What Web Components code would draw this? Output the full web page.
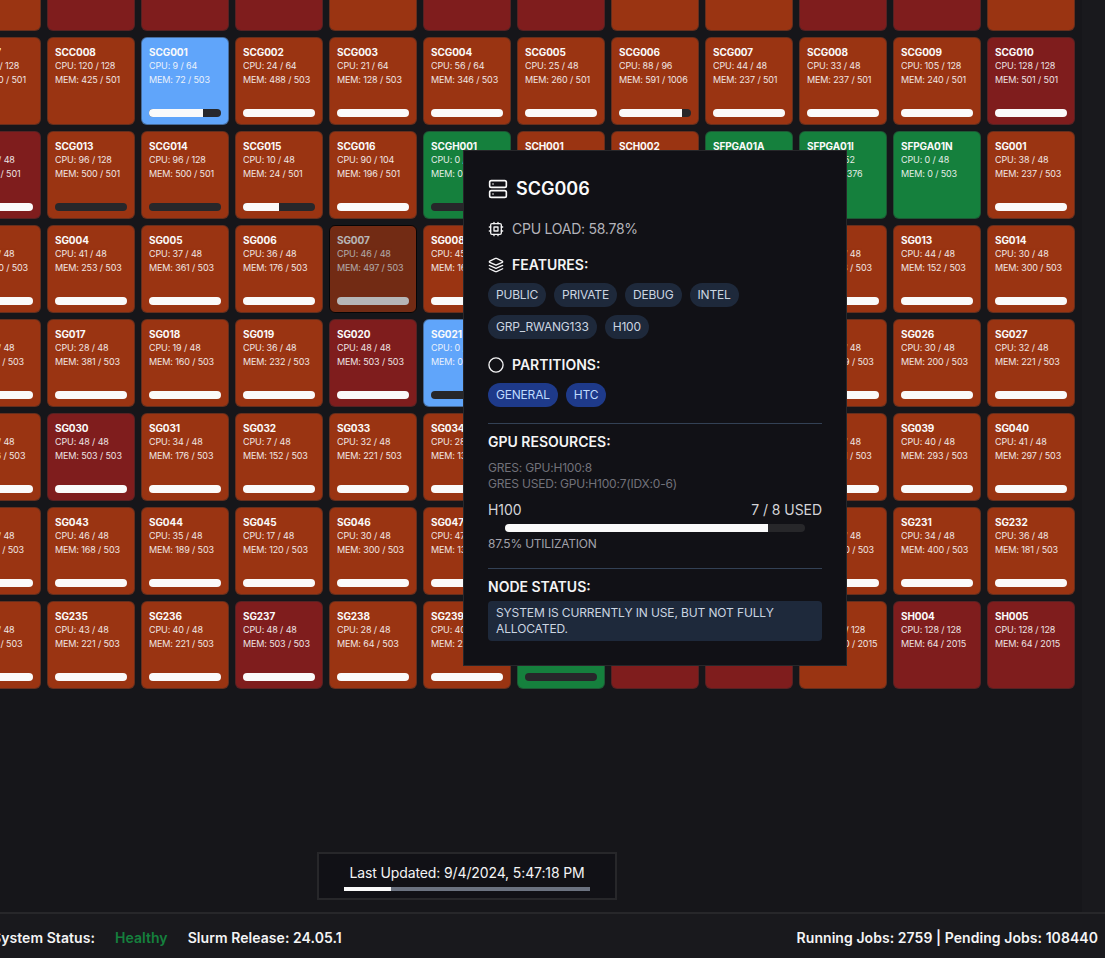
<!DOCTYPE html>
<html lang="en">
<head>
<meta charset="utf-8">
<title>Cluster nodes</title>
<style>
  html, body { margin: 0; height: 100%; background: #19191d; overflow: hidden; }
  body { font-family: Inter, "Noto Sans", sans-serif; color: #fafafa; }
</style>
</head>
<body>
<cluster-app></cluster-app>

<script>
/* Cluster node overview: a grid of node cards, one open detail panel,
 * refresh badge and footer status bar. */
(function () {
  const COLORS = { o: '#9a3412', r: '#7f1d1d', g: '#15803d', b: '#60a5fa' };

  // [name, state, cpu, mem, bar%]  bar null = no bar drawn
  const NODES = [
    ['', 'o', '', '', null], ['', 'r', '', '', null], ['', 'r', '', '', null], ['', 'r', '', '', null],
    ['', 'o', '', '', null], ['', 'r', '', '', null], ['', 'r', '', '', null], ['', 'o', '', '', null],
    ['', 'o', '', '', null], ['', 'r', '', '', null], ['', 'r', '', '', null], ['', 'o', '', '', null],

    ['SCC007', 'o', '112 / 128', '320 / 501', null],
    ['SCC008', 'o', '120 / 128', '425 / 501', null],
    ['SCG001', 'b', '9 / 64', '72 / 503', 75],
    ['SCG002', 'o', '24 / 64', '488 / 503', 100],
    ['SCG003', 'o', '21 / 64', '128 / 503', 100],
    ['SCG004', 'o', '56 / 64', '346 / 503', 100],
    ['SCG005', 'o', '25 / 48', '260 / 501', 100],
    ['SCG006', 'o', '88 / 96', '591 / 1006', 87.5],
    ['SCG007', 'o', '44 / 48', '237 / 501', 100],
    ['SCG008', 'o', '33 / 48', '237 / 501', 100],
    ['SCG009', 'o', '105 / 128', '240 / 501', 100],
    ['SCG010', 'r', '128 / 128', '501 / 501', 100],

    ['SCG012', 'r', '48 / 48', '24 / 501', 100],
    ['SCG013', 'o', '96 / 128', '500 / 501', 0],
    ['SCG014', 'o', '96 / 128', '500 / 501', 0],
    ['SCG015', 'o', '10 / 48', '24 / 501', 50],
    ['SCG016', 'o', '90 / 104', '196 / 501', 100],
    ['SCGH001', 'g', '0 / 48', '0 / 503', 0],
    ['SCH001', 'o', '24 / 48', '96 / 503', 100],
    ['SCH002', 'o', '24 / 48', '96 / 503', 100],
    ['SFPGA01A', 'g', '0 / 52', '0 / 376', null],
    ['SFPGA01I', 'g', '0 / 52', '0 / 376', null],
    ['SFPGA01N', 'g', '0 / 48', '0 / 503', null],
    ['SG001', 'o', '38 / 48', '237 / 503', 100],

    ['SG003', 'o', '36 / 48', '300 / 503', 100],
    ['SG004', 'o', '41 / 48', '253 / 503', 100],
    ['SG005', 'o', '37 / 48', '361 / 503', 100],
    ['SG006', 'o', '36 / 48', '176 / 503', 100],
    ['SG007', 'o', '46 / 48', '497 / 503', 100, true],
    ['SG008', 'o', '45 / 48', '168 / 503', 100],
    ['SG009', 'o', '30 / 48', '200 / 503', 100],
    ['SG010', 'o', '30 / 48', '200 / 503', 100],
    ['SG011', 'o', '30 / 48', '200 / 503', 100],
    ['SG012', 'o', '40 / 48', '168 / 503', 100],
    ['SG013', 'o', '44 / 48', '152 / 503', 100],
    ['SG014', 'o', '30 / 48', '300 / 503', 100],

    ['SG016', 'o', '36 / 48', '181 / 503', 100],
    ['SG017', 'o', '28 / 48', '381 / 503', 100],
    ['SG018', 'o', '19 / 48', '160 / 503', 100],
    ['SG019', 'o', '36 / 48', '232 / 503', 100],
    ['SG020', 'r', '48 / 48', '503 / 503', 100],
    ['SG021', 'b', '0 / 48', '0 / 503', 0],
    ['SG022', 'o', '30 / 48', '200 / 503', 100],
    ['SG023', 'o', '30 / 48', '200 / 503', 100],
    ['SG024', 'o', '30 / 48', '200 / 503', 100],
    ['SG025', 'o', '40 / 48', '289 / 503', 100],
    ['SG026', 'o', '30 / 48', '200 / 503', 100],
    ['SG027', 'o', '32 / 48', '221 / 503', 100],

    ['SG029', 'o', '36 / 48', '176 / 503', 100],
    ['SG030', 'r', '48 / 48', '503 / 503', 100],
    ['SG031', 'o', '34 / 48', '176 / 503', 100],
    ['SG032', 'o', '7 / 48', '152 / 503', 100],
    ['SG033', 'o', '32 / 48', '221 / 503', 100],
    ['SG034', 'o', '28 / 48', '132 / 503', 100],
    ['SG035', 'o', '30 / 48', '200 / 503', 100],
    ['SG036', 'o', '30 / 48', '200 / 503', 100],
    ['SG037', 'o', '30 / 48', '200 / 503', 100],
    ['SG038', 'o', '40 / 48', '221 / 503', 100],
    ['SG039', 'o', '40 / 48', '293 / 503', 100],
    ['SG040', 'o', '41 / 48', '297 / 503', 100],

    ['SG042', 'o', '36 / 48', '181 / 503', 100],
    ['SG043', 'o', '46 / 48', '168 / 503', 100],
    ['SG044', 'o', '35 / 48', '189 / 503', 100],
    ['SG045', 'o', '17 / 48', '120 / 503', 100],
    ['SG046', 'o', '30 / 48', '300 / 503', 100],
    ['SG047', 'o', '47 / 48', '132 / 503', 100],
    ['SG048', 'o', '30 / 48', '200 / 503', 100],
    ['SG049', 'o', '30 / 48', '200 / 503', 100],
    ['SG229', 'o', '30 / 48', '200 / 503', 100],
    ['SG230', 'o', '40 / 48', '300 / 503', 100],
    ['SG231', 'o', '34 / 48', '400 / 503', 100],
    ['SG232', 'o', '36 / 48', '181 / 503', 100],

    ['SG234', 'o', '36 / 48', '96 / 503', 100],
    ['SG235', 'o', '43 / 48', '221 / 503', 100],
    ['SG236', 'o', '40 / 48', '221 / 503', 100],
    ['SG237', 'r', '48 / 48', '503 / 503', 100],
    ['SG238', 'o', '28 / 48', '64 / 503', 100],
    ['SG239', 'o', '40 / 48', '221 / 503', 100],
    ['SGM001', 'g', '0 / 48', '0 / 503', 0],
    ['SH001', 'r', '128 / 128', '64 / 2015', null],
    ['SH002', 'r', '128 / 128', '64 / 2015', null],
    ['SH003', 'o', '112 / 128', '320 / 2015', null],
    ['SH004', 'r', '128 / 128', '64 / 2015', null],
    ['SH005', 'r', '128 / 128', '64 / 2015', null],
  ];

  const ICONS = {
    server: '<rect x="2" y="2" width="20" height="8" rx="2"/><rect x="2" y="14" width="20" height="8" rx="2"/><line x1="6" y1="6" x2="6.01" y2="6"/><line x1="6" y1="18" x2="6.01" y2="18"/>',
    cpu: '<rect x="4" y="4" width="16" height="16" rx="2"/><rect x="9" y="9" width="6" height="6"/><path d="M15 2v2M15 20v2M2 15h2M2 9h2M20 15h2M20 9h2M9 2v2M9 20v2"/>',
    layers: '<path d="m12.83 2.18a2 2 0 0 0-1.66 0L2.6 6.08a1 1 0 0 0 0 1.83l8.58 3.91a2 2 0 0 0 1.66 0l8.58-3.9a1 1 0 0 0 0-1.83Z"/><path d="m22 17.65-9.17 4.16a2 2 0 0 1-1.66 0L2 17.65"/><path d="m22 12.65-9.17 4.16a2 2 0 0 1-1.66 0L2 12.65"/>',
    circle: '<circle cx="12" cy="12" r="10.6"/>',
  };
  const icon = (name, size) =>
    `<svg width="${size}" height="${size}" viewBox="0 0 24 24" fill="none" stroke="currentColor" stroke-width="2" stroke-linecap="round" stroke-linejoin="round">${ICONS[name]}</svg>`;

  class NodeCard extends HTMLElement {
    connectedCallback() {
      const state = this.getAttribute('state') || 'o';
      const name = this.getAttribute('name') || '';
      const bar = this.getAttribute('bar');
      const root = this.attachShadow({ mode: 'open' });
      root.innerHTML = `
        <style>
          :host{ display:block; box-sizing:border-box; height:88px; padding:8px 7px 7px; position:relative;
                 background:${COLORS[state]}; border:1px solid rgba(39,39,42,.45); border-radius:6px;
                 font-size:9px; line-height:14px; color:#fafafa; overflow:hidden; }
          :host([dim]){ opacity:.7; border-color:#000; }
          .name{ font-weight:700; font-size:10px; line-height:13px; letter-spacing:-.1px; }
          .line{ opacity:.9; font-weight:400; white-space:nowrap; letter-spacing:-.12px; }
          .bar{ position:absolute; left:7px; right:7px; bottom:7px; height:8px; border-radius:99px;
                background:#27272a; overflow:hidden; }
          .fill{ height:100%; background:#fafafa; }
        </style>
        ${name ? `<div class="name">${name}</div>
        <div class="line">CPU: ${this.getAttribute('cpu')}</div>
        <div class="line">MEM: ${this.getAttribute('mem')}</div>` : ''}
        ${bar !== null ? `<div class="bar"><div class="fill" style="width:${bar}%"></div></div>` : ''}`;
    }
  }
  customElements.define('node-card', NodeCard);

  class NodeGrid extends HTMLElement {
    connectedCallback() {
      const root = this.attachShadow({ mode: 'open' });
      root.innerHTML = `
        <style>
          :host{ display:grid; grid-template-columns:repeat(12, 88px); gap:6px;
                 margin:-57px 0 0 -47px; width:max-content; }
        </style>`;
      NODES.forEach(([name, state, cpu, mem, bar, dim]) => {
        const c = document.createElement('node-card');
        c.setAttribute('state', state);
        if (name) {
          c.setAttribute('name', name);
          c.setAttribute('cpu', cpu);
          c.setAttribute('mem', mem);
        }
        if (bar !== null) c.setAttribute('bar', bar);
        if (dim) c.setAttribute('dim', '');
        root.appendChild(c);
      });
    }
  }
  customElements.define('node-grid', NodeGrid);

  class TagPill extends HTMLElement {
    connectedCallback() {
      this.attachShadow({ mode: 'open' }).innerHTML = `
        <style>
          :host{ display:inline-block; height:24px; line-height:24px; padding:0 8px; border-radius:12px;
                 font-size:12px; letter-spacing:-.2px; background:#1e293b; color:#cbd5e1; white-space:nowrap; }
          :host([kind="partition"]){ background:#1e3a8a; color:#bfdbfe; }
        </style><slot></slot>`;
    }
  }
  customElements.define('tag-pill', TagPill);

  class NodeDetails extends HTMLElement {
    connectedCallback() {
      this.attachShadow({ mode: 'open' }).innerHTML = `
        <style>
          :host{ display:block; position:absolute; left:463px; top:150px; width:384px; box-sizing:border-box;
                 padding:24px; background:#111116; border:1px solid #27272a; font-size:14px; line-height:20px;
                 text-transform:uppercase; z-index:10; }
          .head{ display:flex; align-items:center; gap:8px; height:28px; font-size:18px; font-weight:600;
                 line-height:28px; color:#fafafa; margin-bottom:16px; }
          .row{ display:flex; align-items:center; gap:8px; }
          .row svg{ flex:none; }
          .load{ color:#b4b4bb; letter-spacing:-.25px; }
          .load svg{ color:#f4f4f5; }
          .sec{ font-weight:600; color:#f4f4f5; margin-top:16px; }
          .tags{ display:flex; flex-wrap:wrap; gap:8px; margin-top:8px; }
          hr{ border:0; border-top:1px solid #334155; margin:16px 0 8px; }
          .plain{ font-weight:600; color:#f4f4f5; }
          .gres{ font-size:12px; line-height:16px; letter-spacing:-.2px; color:#71717a; margin-top:8px; }
          .usage{ display:flex; justify-content:space-between; color:#d4d4d8; margin-top:8px; letter-spacing:-.05px; }
          .track{ width:300px; height:8px; margin:4px auto 0; background:#27272a; border-radius:99px; overflow:hidden; }
          .track div{ width:87.5%; height:100%; background:#fafafa; }
          .util{ font-size:12px; line-height:16px; letter-spacing:-.22px; color:#a1a1aa; margin-top:4px; }
          .note{ margin-top:4px; padding:4px 8px; background:#1e293b; border-radius:4px; font-size:12px;
                 line-height:16px; letter-spacing:-.12px; color:#cbd5e1; }
        </style>
        <div class="head">${icon('server', 20)}<span>SCG006</span></div>
        <div class="row load">${icon('cpu', 16)}<span>CPU Load: 58.78%</span></div>
        <div class="row sec">${icon('layers', 16)}<span>Features:</span></div>
        <div class="tags">
          <tag-pill>PUBLIC</tag-pill><tag-pill>PRIVATE</tag-pill><tag-pill>DEBUG</tag-pill><tag-pill>INTEL</tag-pill>
          <tag-pill>GRP_RWANG133</tag-pill><tag-pill>H100</tag-pill>
        </div>
        <div class="row sec">${icon('circle', 16)}<span>Partitions:</span></div>
        <div class="tags">
          <tag-pill kind="partition">GENERAL</tag-pill><tag-pill kind="partition">HTC</tag-pill>
        </div>
        <hr>
        <div class="plain">GPU Resources:</div>
        <div class="gres">GRES: gpu:h100:8<br>GRES Used: gpu:h100:7(IDX:0-6)</div>
        <div class="usage"><span>H100</span><span>7 / 8 used</span></div>
        <div class="track"><div></div></div>
        <div class="util">87.5% utilization</div>
        <hr>
        <div class="plain">Node Status:</div>
        <div class="note">System is currently in use, but not fully allocated.</div>`;
    }
  }
  customElements.define('node-details', NodeDetails);

  class UpdateBadge extends HTMLElement {
    connectedCallback() {
      this.attachShadow({ mode: 'open' }).innerHTML = `
        <style>
          :host{ display:block; box-sizing:border-box; width:300px; height:48px; padding:9px 25px 0;
                 background:#111116; border:2px solid #27272a; font-size:14px; line-height:20px;
                 letter-spacing:-.12px; text-align:center; color:#f4f4f5; margin:auto 0 12px 317px; }
          .track{ height:4px; margin-top:4px; background:#6b7280; }
          .track div{ width:19%; height:100%; background:#fafafa; }
        </style>
        <div>Last Updated: 9/4/2024, 5:47:18 PM</div>
        <div class="track"><div></div></div>`;
    }
  }
  customElements.define('update-badge', UpdateBadge);

  class StatusFooter extends HTMLElement {
    connectedCallback() {
      this.attachShadow({ mode: 'open' }).innerHTML = `
        <style>
          :host{ display:flex; align-items:center; justify-content:space-between; flex:none; box-sizing:border-box;
                 height:46px; padding:2px 7px 0 0; border-top:2px solid #27272a; font-size:14px; font-weight:600;
                 letter-spacing:.06px; color:#f4f4f5; white-space:nowrap; }
          .left{ display:flex; gap:20px; margin-left:-8px; }
          .ok{ color:#15803d; }
        </style>
        <div class="left"><span>System Status:</span><span class="ok">Healthy</span><span>Slurm Release: 24.05.1</span></div>
        <div>Running Jobs: 2759 | Pending Jobs: 108440</div>`;
    }
  }
  customElements.define('status-footer', StatusFooter);

  class ClusterApp extends HTMLElement {
    connectedCallback() {
      this.attachShadow({ mode: 'open' }).innerHTML = `
        <style>
          :host{ display:flex; flex-direction:column; height:100vh; overflow:hidden; }
          main{ flex:1; min-height:0; position:relative; overflow:hidden; display:flex; flex-direction:column; }
          .wash{ position:absolute; left:0; right:23px; top:0; bottom:0; background:#16161a; }
          node-grid, update-badge{ position:relative; }
        </style>
        <main>
          <div class="wash"></div>
          <node-grid></node-grid>
          <update-badge></update-badge>
          <node-details></node-details>
        </main>
        <status-footer></status-footer>`;
    }
  }
  customElements.define('cluster-app', ClusterApp);
})();
</script>
</body>
</html>
